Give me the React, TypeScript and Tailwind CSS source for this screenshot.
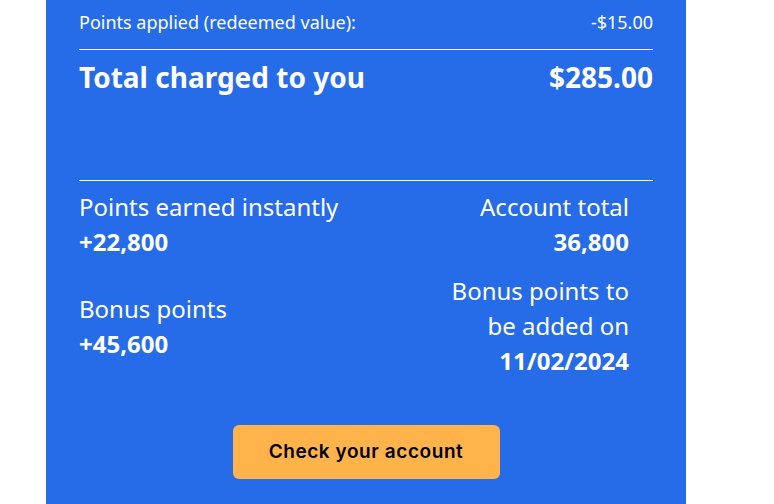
import React from 'react';

const font = { fontFamily: '"Noto Sans", "Open Sans", sans-serif' };

export default function App() {
  return (
    <div className="w-[774px] h-[504px] bg-white overflow-hidden">
      <div
        className="ml-[46px] w-[640px] h-[504px] bg-[#266ce9] px-[33px] text-white"
        style={font}
      >
        {/* Redeemed row */}
        <div className="flex justify-between pt-[10px] pb-[15px] border-b border-white text-[18px] leading-6">
          <span>Points applied (redeemed value):</span>
          <span>-$15.00</span>
        </div>

        {/* Total row */}
        <div className="flex justify-between items-center mt-[11px] h-[32px] text-[28px] font-bold leading-8">
          <span>Total charged to you</span>
          <span>$285.00</span>
        </div>

        {/* Points summary */}
        <div className="mt-[87px] border-t border-white pt-[8px] grid grid-cols-[1fr_190px] gap-y-[14px] items-center pr-[24px] text-[24px] leading-[35px]">
          <div>
            <div>Points earned instantly</div>
            <div className="font-bold">+22,800</div>
          </div>
          <div className="text-right">
            <div>Account total</div>
            <div className="font-bold">36,800</div>
          </div>
          <div>
            <div>Bonus points</div>
            <div className="font-bold">+45,600</div>
          </div>
          <div className="text-right">
            <div>Bonus points to be added on</div>
            <div className="font-bold">11/02/2024</div>
          </div>
        </div>

        {/* CTA */}
        <div className="flex justify-center mt-[47px]">
          <button
            className="w-[267px] h-[54px] rounded-md bg-[#ffb34a] text-black text-[19px] font-semibold tracking-[0.03em]"
            style={{ fontFamily: '"Inter", sans-serif' }}
          >
            Check your account
          </button>
        </div>
      </div>
    </div>
  );
}
